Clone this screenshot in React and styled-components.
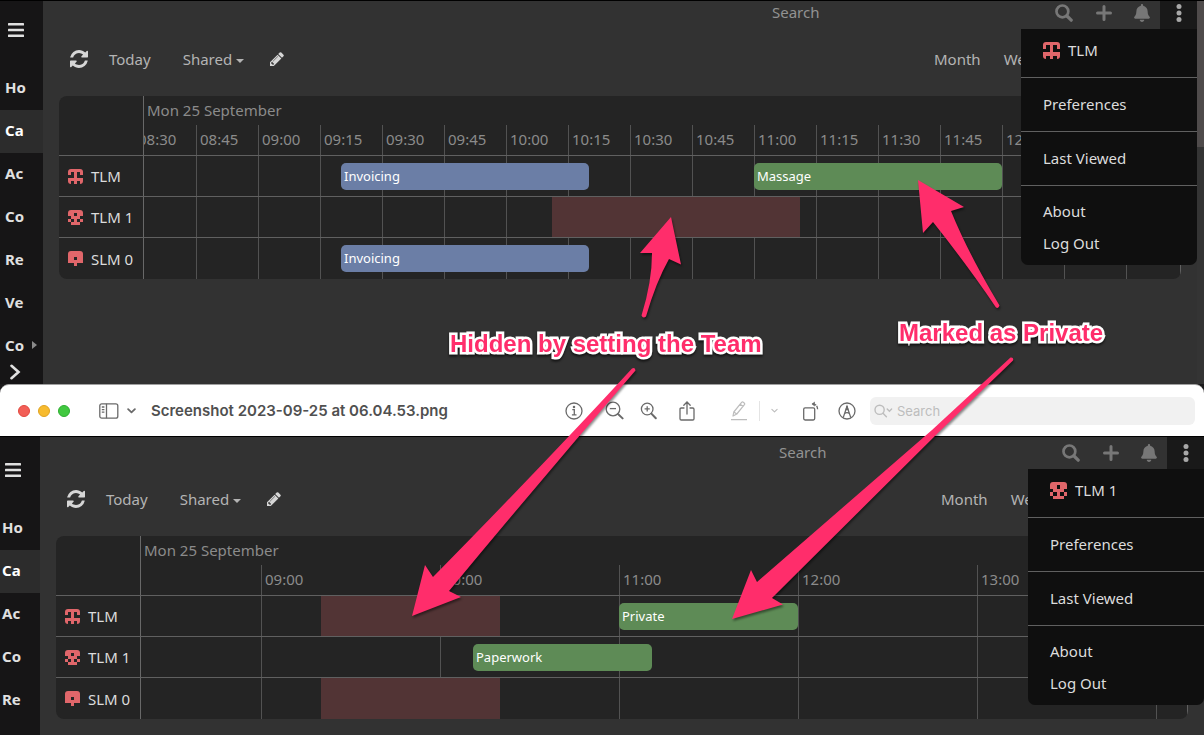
// Shared calendar - two sessions compared side by side, with review notes on top
import React from "react";
import styled, { createGlobalStyle, css } from "styled-components";
import { FaBell } from "react-icons/fa";

const GlobalStyle = createGlobalStyle`
  * {
    box-sizing: border-box;
  }

  body {
    margin: 0;
    overflow: hidden;
    background: #323232;
    font-family: "Noto Sans", "Open Sans", sans-serif;
    font-size: 15px;
    line-height: 20px;
  }

  button,
  input {
    font: inherit;
    color: inherit;
    background: none;
    border: 0;
    padding: 0;
    margin: 0;
  }
`;

const Page = styled.div`
  position: relative;
  display: flex;
  flex-direction: column;
  height: 100vh;
`;

/* ---------- calendar window ---------- */

const Window = styled.section`
  display: flex;
  flex: ${(props) => (props.$grow ? "1" : "none")};
  min-height: 0;
  overflow: hidden;
  background: #323232;
  border-top: ${(props) => (props.$grow ? "0" : "1px solid #000")};
`;

const Sidebar = styled.nav`
  flex: none;
  width: ${(props) => props.$width}px;
  padding-bottom: 4px;
  background: #161516;
  color: #e0e0e0;
`;

const SidebarHead = styled.div`
  display: flex;
  align-items: flex-end;
  height: ${(props) => props.$bar + 38}px;
  padding: 0 0 30px ${(props) => props.$inset + 3}px;
`;

const SidebarLink = styled.a`
  display: flex;
  align-items: center;
  gap: 8px;
  height: 43px;
  padding: 0 0 3px ${(props) => props.$inset}px;
  font-weight: bold;
  color: inherit;
  text-decoration: none;

  ${(props) =>
    props.$active &&
    css`
      background: #2c2c2c;
      color: #fff;
    `}
`;

const IconButton = styled.button`
  display: flex;
  align-items: center;
  justify-content: center;
`;

const ExpandButton = styled(IconButton)`
  margin: -4px 0 0 8px;
`;

const Main = styled.main`
  position: relative;
  flex: 1;
  min-width: 0;
`;

const TopBar = styled.header`
  display: flex;
  justify-content: flex-end;
  align-items: flex-end;
  height: ${(props) => props.$bar}px;
  color: #777;
`;

const SearchInput = styled.input`
  width: 271px;
  height: 32px;
  padding-bottom: 2px;
  outline: 0;

  &::placeholder {
    color: #929292;
    opacity: 1;
  }
`;

const TopButton = styled(IconButton)`
  width: ${(props) => props.$width}px;
  height: 32px;
`;

const MoreButton = styled(TopButton)`
  align-self: stretch;
  height: auto;
  align-items: flex-end;
  padding-bottom: 7px;
  background: #191919;
  color: #a8a8a8;
`;

const Toolbar = styled.div`
  display: flex;
  align-items: center;
  height: 60px;
  margin-bottom: 7px;
  padding-left: 27px;
  color: #b4b4b4;
`;

const ToolButton = styled.button`
  display: flex;
  align-items: center;
  margin-right: ${(props) => props.$gap}px;
`;

const Caret = styled.span`
  margin: 3px 0 0 4px;
  border: 4px solid transparent;
  border-top-color: currentColor;
  border-bottom: 0;
`;

const ItemCaret = styled.span`
  border: 4px solid transparent;
  border-left: 5px solid #8a8a8a;
  border-right: 0;
`;

const ViewButtons = styled.div`
  display: flex;
  width: 263px;
  margin-left: auto;
`;

/* ---------- timeline ---------- */

const Timeline = styled.div`
  margin: 0 16px;
  background: #242424;
  border-radius: 8px;
  overflow: hidden;
`;

const TimelineRow = styled.div`
  display: flex;
  height: ${(props) => props.$height}px;
  border-bottom: 1px solid #606060;

  &:last-child {
    border-bottom: 0;
  }
`;

const ResourceCell = styled.div`
  flex: none;
  display: flex;
  align-items: center;
  gap: 8px;
  width: 85px;
  padding-left: 9px;
  border-right: 1px solid #686868;
  color: #dcdcdc;
  white-space: nowrap;
`;

const Axis = styled.div`
  flex: 1;
  min-width: 0;
  overflow: hidden;
  border-right: 1px solid #606060;
  color: #8b8b8b;
`;

const DateLabel = styled.div`
  height: 29px;
  padding: 4px 3px;
`;

const Lane = styled.div`
  position: relative;
  flex: 1;
  min-width: 0;
  overflow: hidden;
  border-right: 1px solid #606060;
`;

const Slots = styled.div`
  display: flex;
  height: ${(props) => props.$height};
  margin-left: ${(props) => props.$offset}px;
`;

const Slot = styled.div`
  flex: none;
  width: ${(props) => props.$width}px;
  padding: 4px 3px;
  border-left: 1px solid #525252;
`;

const eventColors = {
  blue: "#6b7ea6",
  green: "#5e8b56",
};

const Event = styled.div`
  position: absolute;
  top: 7px;
  height: 27px;
  padding: 3px;
  border-radius: 5px;
  background: ${(props) => eventColors[props.$color]};
  color: #fff;
  font-size: 13px;
  white-space: nowrap;
`;

const HiddenEvent = styled.div`
  position: absolute;
  top: 0;
  bottom: 0;
  background: #523435;
`;

/* ---------- user menu ---------- */

const Menu = styled.div`
  position: absolute;
  top: ${(props) => props.$top}px;
  right: 0;
  z-index: 2;
  width: 176px;
  padding-top: 5px;
  background: #0f0f0f;
  border-radius: 0 0 7px 7px;
  color: #dcdcdc;
`;

const MenuGroup = styled.div`
  padding: 10px 22px 11px;
  border-bottom: 1px solid #606060;

  &:first-child {
    padding-top: 0;
  }

  &:last-child {
    padding: 9px 22px 6px;
    border-bottom: 0;
  }
`;

const MenuLink = styled.a`
  display: flex;
  align-items: center;
  gap: 8px;
  height: 32px;
  color: inherit;
  text-decoration: none;
`;

const ScrollTrack = styled.div`
  flex: none;
  width: 7px;
  background: #343434;
`;

const ScrollThumb = styled.div`
  height: 146px;
  background: #4f4b4b;
`;

/* ---------- preview title bar ---------- */

const TitleBarWrap = styled.div`
  flex: none;
  background: #1c1b1c;
  border-bottom: 1px solid #000;
`;

const TitleBar = styled.div`
  display: flex;
  align-items: center;
  height: 52px;
  padding: 0 9px 0 18px;
  background: #fff;
  border-top: 1px solid #a0a0a0;
  border-radius: 9px 9px 0 0;
  color: #6a6a6a;
  font-family: Inter, "Liberation Sans", sans-serif;
`;

const Light = styled.button`
  width: 12px;
  height: 12px;
  margin-right: 8px;
  border: 1px solid ${(props) => props.$border};
  border-radius: 50%;
  background: ${(props) => props.$color};
`;

const SidebarToggle = styled(IconButton)`
  gap: 8px;
  margin: 0 15px 0 21px;
`;

const FileName = styled.h1`
  margin: 0 auto 0 0;
  font-size: 15px;
  font-weight: 600;
  color: #505050;
  white-space: nowrap;
`;

const BarButton = styled(IconButton)`
  width: ${(props) => props.$width}px;
  height: 28px;
  margin-right: ${(props) => props.$gap || 0}px;
  color: ${(props) => (props.$dim ? "#bdbdbd" : "#6a6a6a")};
`;

const BarDivider = styled.span`
  width: 1px;
  height: 20px;
  background: #e4e4e4;
`;

const FileSearch = styled.label`
  display: flex;
  align-items: center;
  gap: 4px;
  width: 325px;
  height: 28px;
  padding-left: 4px;
  border-radius: 6px;
  background: #f1f1f1;
  color: #bdbdbd;
  font-size: 13px;

  input {
    flex: 1;
    min-width: 0;
    outline: 0;
  }

  input::placeholder {
    color: #bdbdbd;
    opacity: 1;
  }
`;

/* ---------- review notes ---------- */

const Arrows = styled.svg`
  position: absolute;
  top: 0;
  left: 0;
  z-index: 3;
  pointer-events: none;
  filter: drop-shadow(1px 2px 1px rgba(0, 0, 0, 0.45));
`;

const Note = styled.p`
  position: absolute;
  left: ${(props) => props.$left}px;
  top: ${(props) => props.$top}px;
  z-index: 4;
  margin: 0;
  font-family: "Liberation Sans", Arial, sans-serif;
  font-size: 24px;
  font-weight: bold;
  line-height: 28px;
  color: #ff2d6b;
  white-space: nowrap;
  -webkit-text-stroke: 5px #fff;
  paint-order: stroke fill;
  filter: drop-shadow(0 2px 1px rgba(0, 0, 0, 0.6));
`;

/* ---------- icons ---------- */

const BarsIcon = () => (
  <svg width="16" height="14" viewBox="0 0 16 14" fill="currentColor">
    <rect y="0" width="16" height="2.6" rx="0.6" />
    <rect y="5.7" width="16" height="2.6" rx="0.6" />
    <rect y="11.4" width="16" height="2.6" rx="0.6" />
  </svg>
);

const RefreshIcon = () => (
  <svg width="18" height="18" viewBox="0 0 1536 1536" fill="#d6d6d6">
    <path d="M1511 928q0 5-1 7-64 268-268 434.5t-478 166.5q-146 0-282.5-55t-243.5-157l-129 129q-19 19-45 19t-45-19-19-45v-448q0-26 19-45t45-19h448q26 0 45 19t19 45-19 45l-137 137q71 66 161 102t187 36q134 0 250-65t186-179q11-17 53-117 8-23 30-23h192q13 0 22.5 9.5t9.5 22.5zm25-800v448q0 26-19 45t-45 19h-448q-26 0-45-19t-19-45 19-45l138-138q-148-137-349-137-134 0-250 65t-186 179q-11 17-53 117-8 23-30 23h-199q-13 0-22.5-9.5t-9.5-22.5v-7q65-268 270-434.5t480-166.5q146 0 284 55.5t245 156.5l130-129q19-19 45-19t45 19 19 45z" />
  </svg>
);

const PencilIcon = () => (
  <svg width="14" height="14" viewBox="0 0 1536 1536" fill="#d6d6d6">
    <path d="M363 1408l91-91-235-235-91 91v107h128v128h107zm523-928q0-22-22-22-10 0-17 7l-542 542q-7 7-7 17 0 22 22 22 10 0 17-7l542-542q7-7 7-17zm-54-192l416 416-832 832h-416v-416zm683 96q0 53-37 90l-166 166-416-416 166-165q36-38 90-38 53 0 91 38l235 234q37 39 37 91z" />
  </svg>
);

const SearchIcon = () => (
  <svg width="18" height="18" viewBox="0 0 18 18" fill="none" stroke="currentColor">
    <circle cx="7.4" cy="7.4" r="5.9" strokeWidth="2.7" />
    <path d="M12 12l4.2 4.2" strokeWidth="3.2" strokeLinecap="round" />
  </svg>
);

const PlusIcon = () => (
  <svg width="16" height="16" viewBox="0 0 16 16" stroke="currentColor" strokeWidth="3" strokeLinecap="round">
    <path d="M8 1.5v13M1.5 8h13" />
  </svg>
);

const DotsIcon = () => (
  <svg width="6" height="18" viewBox="0 0 6 18" fill="currentColor">
    <circle cx="3" cy="2.6" r="2.5" />
    <circle cx="3" cy="9" r="2.5" />
    <circle cx="3" cy="15.4" r="2.5" />
  </svg>
);

const ChevronIcon = ({ size = 8, weight = 1.6 }) => (
  <svg width={size} height={size} viewBox="0 0 8 8" fill="none" stroke="currentColor" strokeWidth={weight} strokeLinecap="round" strokeLinejoin="round">
    <path d="M1 2.8l3 2.8 3-2.8" />
  </svg>
);

// 5x5 identicons, one string per row
const avatars = {
  TLM: ["11111", "10101", "00100", "11111", "10101"],
  "TLM 1": ["11111", "11011", "01110", "10101", "01110"],
  "SLM 0": ["11111", "11111", "11011", "11111", "00100"],
};

const AvatarSvg = styled.svg`
  flex: none;
  border-radius: 3px;
`;

const Avatar = ({ name, size = 15 }) => (
  <AvatarSvg width={size} height={size} viewBox="0 0 5 5" fill="#e0666a" shapeRendering="crispEdges">
    {avatars[name].map((row, y) =>
      row
        .split("")
        .map((cell, x) =>
          cell === "1" ? <rect key={`${x}-${y}`} x={x} y={y} width="1" height="1" /> : null
        )
    )}
  </AvatarSvg>
);

/* ---------- data ---------- */

const minutes = (time) => {
  const [h, m] = time.split(":").map(Number);
  return h * 60 + m;
};

const firstSession = {
  user: "TLM",
  bar: 28,
  sidebarWidth: 43,
  inset: 5,
  links: ["Ho", "Ca", "Ac", "Co", "Re", "Ve", "Co"],
  scale: { first: "08:30", step: 15, width: 62, offset: -10, count: 17 },
  rows: [
    {
      name: "TLM",
      events: [
        { title: "Invoicing", color: "blue", from: "09:20", to: "10:20" },
        { title: "Massage", color: "green", from: "11:00", to: "12:00" },
      ],
    },
    { name: "TLM 1", events: [{ hidden: true, from: "10:11", to: "11:11" }] },
    {
      name: "SLM 0",
      events: [{ title: "Invoicing", color: "blue", from: "09:20", to: "10:20" }],
    },
  ],
};

const secondSession = {
  user: "TLM 1",
  bar: 32,
  sidebarWidth: 40,
  inset: 2,
  links: ["Ho", "Ca", "Ac", "Co", "Re"],
  scale: { first: "09:00", step: 60, width: 179, offset: 120, count: 6 },
  rows: [
    {
      name: "TLM",
      events: [
        { hidden: true, from: "09:20", to: "10:20" },
        { title: "Private", color: "green", from: "11:00", to: "12:00" },
      ],
    },
    {
      name: "TLM 1",
      events: [{ title: "Paperwork", color: "green", from: "10:11", to: "11:11" }],
    },
    { name: "SLM 0", events: [{ hidden: true, from: "09:20", to: "10:20" }] },
  ],
};

/* ---------- components ---------- */

const slotTimes = ({ first, step, count }) =>
  Array.from({ length: count }, (_, i) => {
    const total = minutes(first) + i * step;
    const h = String(Math.floor(total / 60)).padStart(2, "0");
    const m = String(total % 60).padStart(2, "0");
    return `${h}:${m}`;
  });

const TimelineView = ({ scale, rows }) => {
  const times = slotTimes(scale);
  const position = (time) =>
    Math.ceil(scale.offset + ((minutes(time) - minutes(scale.first)) * scale.width) / scale.step);

  return (
    <Timeline>
      <TimelineRow $height={60}>
        <ResourceCell />
        <Axis>
          <DateLabel>Mon 25 September</DateLabel>
          <Slots $height="30px" $offset={scale.offset}>
            {times.map((time) => (
              <Slot key={time} $width={scale.width}>
                {time}
              </Slot>
            ))}
          </Slots>
        </Axis>
      </TimelineRow>
      {rows.map((row) => (
        <TimelineRow key={row.name} $height={41}>
          <ResourceCell>
            <Avatar name={row.name} />
            {row.name}
          </ResourceCell>
          <Lane>
            <Slots $height="100%" $offset={scale.offset}>
              {times.map((time) => (
                <Slot key={time} $width={scale.width} />
              ))}
            </Slots>
            {row.events.map((event) => {
              const left = position(event.from);
              const width = position(event.to) - left;
              return event.hidden ? (
                <HiddenEvent key={event.from} style={{ left, width }} />
              ) : (
                <Event key={event.from} $color={event.color} style={{ left, width }}>
                  {event.title}
                </Event>
              );
            })}
          </Lane>
        </TimelineRow>
      ))}
    </Timeline>
  );
};

const UserMenu = ({ user, top }) => (
  <Menu $top={top}>
    <MenuGroup>
      <MenuLink href="#profile">
        <Avatar name={user} size={17} />
        {user}
      </MenuLink>
    </MenuGroup>
    <MenuGroup>
      <MenuLink href="#preferences">Preferences</MenuLink>
    </MenuGroup>
    <MenuGroup>
      <MenuLink href="#last-viewed">Last Viewed</MenuLink>
    </MenuGroup>
    <MenuGroup>
      <MenuLink href="#about">About</MenuLink>
      <MenuLink href="#logout">Log Out</MenuLink>
    </MenuGroup>
  </Menu>
);

const CalendarWindow = ({ session, grow, scrollbar }) => {
  const { bar, inset, links, user } = session;

  return (
    <Window $grow={grow}>
      <Sidebar $width={session.sidebarWidth}>
        <SidebarHead $bar={bar} $inset={inset}>
          <IconButton aria-label="Menu">
            <BarsIcon />
          </IconButton>
        </SidebarHead>
        {links.map((label, i) => (
          <SidebarLink key={i} href="#nav" $inset={inset} $active={label === "Ca"}>
            {label}
            {i === 6 && <ItemCaret />}
          </SidebarLink>
        ))}
        {links.length > 5 && (
          <ExpandButton aria-label="Expand">
            <svg width="14" height="16" viewBox="0 0 14 16" fill="none" stroke="#e0e0e0" strokeWidth="2.6" strokeLinecap="round">
              <path d="M3.5 1.8L10.5 8l-7 6.2" />
            </svg>
          </ExpandButton>
        )}
      </Sidebar>
      <Main>
        <TopBar $bar={bar}>
          <SearchInput type="search" aria-label="Search" placeholder="Search" />
          <TopButton $width={42} aria-label="Run search">
            <SearchIcon />
          </TopButton>
          <TopButton $width={38} aria-label="Create">
            <PlusIcon />
          </TopButton>
          <TopButton $width={37} aria-label="Notifications">
            <FaBell size={18} />
          </TopButton>
          <MoreButton $width={37} aria-label="More">
            <DotsIcon />
          </MoreButton>
        </TopBar>
        <UserMenu user={user} top={bar} />
        <Toolbar>
          <ToolButton $gap={21} aria-label="Refresh">
            <RefreshIcon />
          </ToolButton>
          <ToolButton $gap={32}>Today</ToolButton>
          <ToolButton $gap={26}>
            Shared
            <Caret />
          </ToolButton>
          <ToolButton $gap={0} aria-label="Edit">
            <PencilIcon />
          </ToolButton>
          <ViewButtons>
            <ToolButton $gap={23}>Month</ToolButton>
            <ToolButton $gap={23}>Week</ToolButton>
          </ViewButtons>
        </Toolbar>
        <TimelineView scale={session.scale} rows={session.rows} />
      </Main>
      {scrollbar && (
        <ScrollTrack>
          <ScrollThumb />
        </ScrollTrack>
      )}
    </Window>
  );
};

const PreviewBar = () => (
  <TitleBarWrap>
    <TitleBar>
      <Light $color="#f25f57" $border="#e2483f" aria-label="Close" />
      <Light $color="#f7bb2f" $border="#e0a321" aria-label="Minimise" />
      <Light $color="#41c840" $border="#2eae31" aria-label="Zoom" />
      <SidebarToggle aria-label="Toggle sidebar">
        <svg width="20" height="16" viewBox="0 0 20 16" fill="none" stroke="currentColor" strokeWidth="1.3">
          <rect x="0.8" y="0.8" width="18" height="14.4" rx="2" />
          <path d="M7.5 0.8v14.4M2.8 4h2.6M2.8 6.6h2.6M2.8 9.2h2.6" />
        </svg>
        <ChevronIcon size={9} />
      </SidebarToggle>
      <FileName>Screenshot 2023-09-25 at 06.04.53.png</FileName>
      <BarButton $width={40} aria-label="Info">
        <svg width="18" height="18" viewBox="0 0 18 18" fill="none" stroke="currentColor" strokeWidth="1.3">
          <circle cx="9" cy="9" r="8" />
          <path d="M7.3 7.7h2v5M6.9 12.9h4.6" />
          <circle cx="9" cy="4.9" r="0.6" fill="currentColor" />
        </svg>
      </BarButton>
      <BarButton $width={40} aria-label="Zoom out">
        <svg width="19" height="19" viewBox="0 0 19 19" fill="none" stroke="currentColor" strokeWidth="1.3">
          <circle cx="8" cy="8" r="6.8" />
          <path d="M4.8 7.6h6.2" />
          <path d="M13 13l4.6 4.4" strokeWidth="2" strokeLinecap="round" />
        </svg>
      </BarButton>
      <BarButton $width={28} aria-label="Zoom in">
        <svg width="17" height="19" viewBox="0 0 17 19" fill="none" stroke="currentColor" strokeWidth="1.3">
          <circle cx="7.2" cy="8" r="5.8" />
          <path d="M4.6 7.8h5.2M7.2 5.2v5.2" />
          <path d="M11.4 12.6l4.4 4.6" strokeWidth="2" strokeLinecap="round" />
        </svg>
      </BarButton>
      <BarButton $width={50} $gap={7} aria-label="Share">
        <svg width="16" height="20" viewBox="0 0 16 20" fill="none" stroke="currentColor" strokeWidth="1.3" strokeLinecap="round">
          <path d="M5 7H2.3Q1 7 1 8.3v9.4Q1 19 2.3 19h11.4q1.3 0 1.3-1.3V8.3Q15 7 13.7 7H11M8 13V1.2M4.8 4.2L8 1l3.2 3.2" />
        </svg>
      </BarButton>
      <BarButton $width={40} $dim aria-label="Highlight">
        <svg width="18" height="20" viewBox="0 0 18 20" fill="none" stroke="currentColor" strokeWidth="1.2" strokeLinejoin="round">
          <path d="M3 15l.8-4L11.6 1.4q.8-.8 1.7-.1l.9.7q.9.8.2 1.7L6.8 13 3 15zM3.8 11L6.8 13M10.2 3.2l2.9 2.2M1 18.6h16" />
        </svg>
      </BarButton>
      <BarDivider />
      <BarButton $width={28} $dim aria-label="Highlight colours">
        <ChevronIcon size={7} weight={1.3} />
      </BarButton>
      <BarButton $width={46} aria-label="Rotate">
        <svg width="18" height="20" viewBox="0 0 18 20" fill="none" stroke="currentColor" strokeWidth="1.3">
          <rect x="1.7" y="6.8" width="11" height="12.2" rx="1.4" />
          <path d="M10.4 2.9q4.6-.2 5.2 5.3" strokeDasharray="4 1" />
          <path d="M12.8.6L9.6 2.9l3.2 2.5z" fill="currentColor" stroke="none" />
        </svg>
      </BarButton>
      <BarButton $width={25} $gap={11} aria-label="Markup">
        <svg width="18" height="18" viewBox="0 0 18 18" fill="none" stroke="currentColor" strokeWidth="1.3">
          <circle cx="9" cy="9" r="8" />
          <path d="M5.2 15.6L9 4.2l3.8 11.4M6.6 11.6q2.4-1.8 4.8 0" />
          <path d="M8.2 7.6L9 4.2l.8 3.4z" fill="currentColor" />
        </svg>
      </BarButton>
      <FileSearch>
        <svg width="19" height="14" viewBox="0 0 19 14" fill="none" stroke="currentColor" strokeWidth="1.4" strokeLinecap="round">
          <circle cx="5.6" cy="5.8" r="4.6" />
          <path d="M9 9.2l3.4 3.6M13.2 5l2.2 2.2L17.6 5" />
        </svg>
        <input type="search" aria-label="Search in file" placeholder="Search" />
      </FileSearch>
    </TitleBar>
  </TitleBarWrap>
);

const Annotations = () => (
  <>
    <Arrows width="1204" height="735" viewBox="0 0 1204 735" fill="#ff2d6b">
      <path d="M671 217L640 253L652 253Q652 282 641.5 315.5Q643 319 646 316.5Q656 282 669 259L681 264.5Z" />
      <path d="M918 180L964 207L951 211Q968 253 999.5 305.5Q998.5 309 996 307.5Q968 266 933 222L923 233Z" />
      <path d="M412 616L425 565L433 577Q547 461 632 368.5Q635 367 635.5 370.5Q541 480 449 591L461 597Z" />
      <path d="M732 619L751 570L757 582L932 430L1010.5 357.5Q1014 357 1013 360.5L941 430L772 598L783 604.5Z" />
    </Arrows>
    <Note $left={450} $top={330}>
      Hidden by setting the Team
    </Note>
    <Note $left={899} $top={319}>
      Marked as Private
    </Note>
  </>
);

const App = () => {
  return (
    <Page>
      <GlobalStyle />
      <CalendarWindow session={firstSession} scrollbar />
      <PreviewBar />
      <CalendarWindow session={secondSession} grow />
      <Annotations />
    </Page>
  );
};

export default App;
